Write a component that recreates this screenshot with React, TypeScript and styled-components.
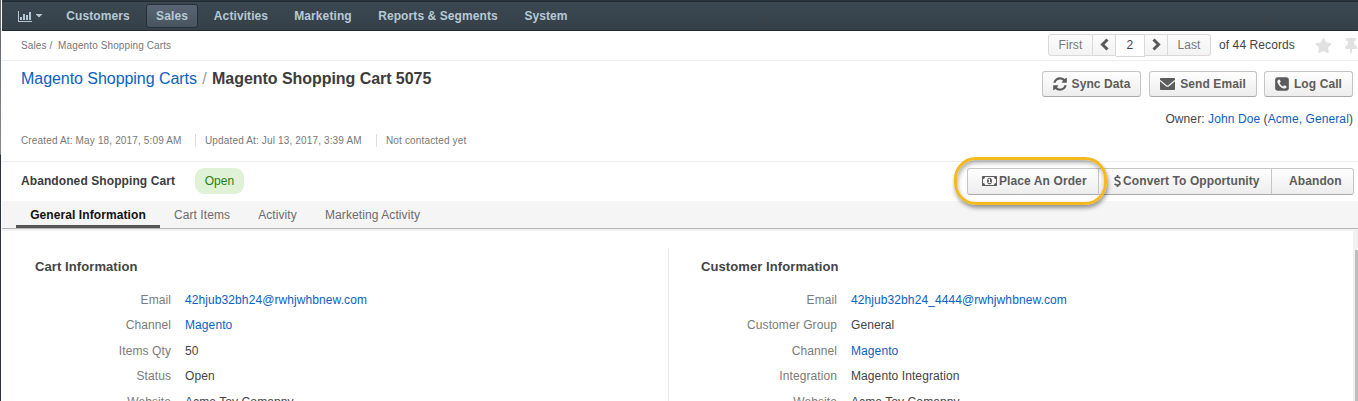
import React from "react";
import styled, { createGlobalStyle, css } from "styled-components";
import { FaStar, FaThumbtack } from "react-icons/fa";

const Global = createGlobalStyle`
  * { box-sizing: border-box; }
  body { margin: 0; background: #fff; font-family: "Liberation Sans", Arial, sans-serif; font-size: 12px; letter-spacing: 0.09px; color: #444; overflow: hidden; }
`;

const Frame = styled.div`
  display: flex;
  height: 401px;
  overflow: hidden;
`;
const WindowEdge = styled.div`
  flex: 0 0 1px;
  margin-right: 1px;
  background: linear-gradient(#5c6368 0, #888b8f 154px, #2b3342 155px);
`;
const Page = styled.div`
  flex: 1;
  min-width: 0;
  display: flex;
  flex-direction: column;
`;
const Link = styled.a`
  color: #0a61c4;
  text-decoration: none;
`;

const NavBar = styled.nav`
  flex: 0 0 31px;
  display: flex;
  align-items: center;
  padding: 1px 0 0 16px;
  border-top: 1px solid #2c353c;
  border-bottom: 1px solid #202a32;
  background: linear-gradient(#222c34 0 1px, #3c4851 1px, #354049);
`;
const NavIcon = styled.span`
  display: flex;
  align-items: center;
  gap: 4px;
  width: 32px;
  color: #b3c7d3;
`;
const NavItem = styled.a<{ $active?: boolean; $width: number }>`
  width: ${(p) => p.$width}px;
  height: 24px;
  line-height: 22px;
  text-align: center;
  font-weight: bold;
  color: #b6c9d5;
  white-space: nowrap;
  border: 1px solid transparent;
  border-radius: 3px;
  ${(p) =>
    p.$active &&
    css`
      border-color: #252e36;
      background: linear-gradient(#596573, #485460);
    `}
`;

const CrumbRow = styled.div`
  flex: 0 0 30px;
  display: flex;
  align-items: center;
  padding-left: 19px;
  border-bottom: 1px solid #eee;
`;
const Crumbs = styled.span`
  flex: 1;
  font-size: 10px;
  letter-spacing: 0.11px;
  color: #777;
  white-space: pre;
`;
const Pager = styled.div`
  display: flex;
  height: 22px;
  line-height: 20px;
  margin-top: -1px;
  color: #777;
`;
const PagerCell = styled.span<{ $width: number; $current?: boolean; $edge?: "left" | "right" }>`
  width: ${(p) => p.$width}px;
  height: ${(p) => (p.$current ? 23 : 22)}px;
  display: flex;
  justify-content: center;
  border: 1px solid #d9d9d9;
  border-left-width: ${(p) => (p.$edge === "left" ? 1 : 0)}px;
  border-radius: ${(p) => (p.$edge === "left" ? "3px 0 0 3px" : p.$edge === "right" ? "0 3px 3px 0" : "0")};
  background: ${(p) => (p.$current ? "#fff" : "linear-gradient(#fcfcfc, #f3f3f3)")};
  color: ${(p) => (p.$current ? "#444" : "#777")};
  svg { margin-top: 3px; }
`;
const Records = styled.span`
  margin-left: 8px;
  width: 96px;
  line-height: 22px;
  color: #444;
`;
const MarkIcons = styled.span`
  display: flex;
  align-items: center;
  width: 43px;
  gap: 11px;
  overflow: hidden;
  color: #e1e1e1;
  svg { flex: none; }
`;

const TitleRow = styled.header`
  flex: 0 0 101px;
  display: flex;
  justify-content: space-between;
  padding: 8px 5px 0 19px;
  border-bottom: 1px solid #eee;
`;
const TitleSide = styled.div`
  display: flex;
  flex-direction: column;
`;
const Title = styled.h1`
  margin: 0;
  height: 20px;
  line-height: 20px;
  font-size: 16px;
  font-weight: normal;
  letter-spacing: -0.05px;
  white-space: pre;
`;
const Slash = styled.span`
  color: #999;
  margin: 0 1px;
`;
const Strong = styled.strong`
  color: #3c3c3c;
`;
const MetaList = styled.div`
  display: flex;
  margin-top: 45px;
  font-size: 10px;
  line-height: 13px;
  color: #777;
  letter-spacing: 0.15px;
`;
const Meta = styled.span<{ $width: number }>`
  width: ${(p) => p.$width}px;
  white-space: nowrap;
  & + & { border-left: 1px solid #ddd; padding-left: 9px; }
`;
const ActionSide = styled.div`
  display: flex;
  flex-direction: column;
  align-items: flex-end;
  padding-top: 2px;
`;
const ActionList = styled.div`
  display: flex;
`;
const raised = css`
  display: flex;
  align-items: center;
  justify-content: center;
  border: 1px solid #c6c6c6;
  border-bottom-color: #aaa;
  background: linear-gradient(#fff, #ededed);
  color: #5c5c5c;
  font: bold 12px "Liberation Sans", Arial, sans-serif;
  letter-spacing: 0.1px;
  white-space: nowrap;
  padding: 0;
`;
const Button = styled.button<{ $width: number }>`
  ${raised}
  width: ${(p) => p.$width}px;
  height: 26px;
  gap: 5px;
  border-radius: 3px;
  & + & { margin-left: 8px; }
  &:last-child { margin-left: 7px; }
`;
const Owner = styled.div`
  margin-top: 14px;
  line-height: 16px;
  white-space: pre;
`;

const StatusRow = styled.div`
  flex: 0 0 39px;
  display: flex;
  align-items: center;
  padding: 0 4px 1px 19px;
`;
const StatusTitle = styled.strong`
  width: 174px;
  color: #3c3c3c;
`;
const Badge = styled.span`
  width: 49px;
  height: 26px;
  line-height: 26px;
  text-align: center;
  border-radius: 9px;
  background: #dff2d5;
  color: #2d7d10;
`;
const ButtonGroup = styled.div`
  position: relative;
  display: flex;
  margin-left: auto;
`;
const GroupButton = styled.button<{ $width: number; $pad: number }>`
  ${raised}
  justify-content: flex-start;
  width: ${(p) => p.$width}px;
  height: 27px;
  padding-left: ${(p) => p.$pad}px;
  gap: 2px;
  &:not(:first-child) { border-left: 0; }
  &:first-child { border-radius: 3px 0 0 3px; }
  &:nth-child(3) { border-radius: 0 3px 3px 0; }
`;
const Highlight = styled.div`
  position: absolute;
  left: -13px;
  top: -11px;
  width: 153px;
  height: 48px;
  border: 3px solid #f4b91f;
  border-radius: 22px;
  box-shadow: 1px 3px 4px rgba(0, 0, 0, 0.4), inset 1px 3px 4px rgba(0, 0, 0, 0.3);
`;

const TabBar = styled.div`
  flex: 0 0 28px;
  display: flex;
  padding-left: 14px;
  background: #f5f5f5;
  border-bottom: 1px solid #b5b5b5;
`;
const Tab = styled.a<{ $active?: boolean; $width: number }>`
  width: ${(p) => p.$width}px;
  height: 27px;
  line-height: 28px;
  text-align: center;
  white-space: nowrap;
  color: ${(p) => (p.$active ? "#111" : "#6c6c6c")};
  font-weight: ${(p) => (p.$active ? "bold" : "normal")};
  border-bottom: ${(p) => (p.$active ? "3px solid #555" : "0")};
`;

const Content = styled.main`
  flex: 1;
  min-height: 0;
  display: flex;
  overflow: hidden;
  border-top: 2px solid #f3f3f3;
`;
const Column = styled.section<{ $width: number }>`
  width: ${(p) => p.$width}px;
  padding: 27px 0 0 33px;
`;
const Divider = styled.div`
  flex: 0 0 1px;
  margin: 17px -1px 0 0;
  background: #e9e9e9;
`;
const SectionTitle = styled.h2`
  margin: 0 0 12px;
  font-size: 13px;
  line-height: 18px;
  color: #444;
`;
const FieldRow = styled.div`
  display: grid;
  grid-template-columns: 136px 1fr;
  column-gap: 14px;
  height: 25.4px;
  line-height: 25px;
`;
const Label = styled.span`
  text-align: right;
  color: #7b7b7b;
`;
const ScrollTrack = styled.div`
  flex: 0 0 5px;
  margin-left: auto;
  padding: 19px 0 0 2px;
  background: #f1f1f1;
`;
const ScrollThumb = styled.div`
  height: 100%;
  background: #bdbdbd;
`;

const ChartIcon = () => (
  <svg width="14" height="11" viewBox="0 0 14 11" fill="currentColor">
    <path d="M0 0h1v10h13v1H0zM2 6h2v3H2zM5 3h2v6H5zM8 4h2v5H8zM11 1h2v8h-2z" />
  </svg>
);
const CaretIcon = () => (
  <svg width="6" height="4" viewBox="0 0 6 4" fill="currentColor">
    <path d="M0 0h6v.5L3 3.500L0 .5z" />
  </svg>
);
const ChevronIcon = ({ right }: { right?: boolean }) => (
  <svg width="9" height="13" viewBox="0 0 9 13" fill="none" stroke="#5b5b5b" strokeWidth="3">
    <path d={right ? "M1.500 1.500L6.500 6.500L1.500 11.500" : "M7.500 1.500L2.500 6.500L7.500 11.500"} />
  </svg>
);
const DollarIcon = () => (
  <svg width="7" height="14" viewBox="0 0 7 14" fill="none" stroke="currentColor" strokeWidth="1.700">
    <path d="M6.200 4.100Q4.900 3 3.500 3Q1.100 3.100 1.100 4.800Q1.100 6.100 3.500 6.800Q6 7.500 6 9.200Q5.900 11 3.500 11Q1.900 11 0.600 9.800M3.500 1v2M3.500 11v2" />
  </svg>
);
const RefreshIcon = () => (
  <svg width="14" height="16" viewBox="0 0 1536 1792" fill="currentColor">
    <path d="M1511 1056q0 5-1 7-64 268-268 434.500t-478 166.500q-146 0-282.500-55t-243.500-157l-129 129q-19 19-45 19t-45-19-19-45v-448q0-26 19-45t45-19h448q26 0 45 19t19 45-19 45l-137 137q71 66 161 102t187 36q134 0 250-65t186-179q11-17 53-117 8-23 30-23h192q13 0 22.500 9.500t9.500 22.500zm25-800v448q0 26-19 45t-45 19h-448q-26 0-45-19t-19-45 19-45l138-138q-148-137-349-137-134 0-250 65t-186 179q-11 17-53 117-8 23-30 23h-199q-13 0-22.500-9.500t-9.500-22.500v-7q65-268 270-434.500t480-166.500q146 0 284 55.500t245 156.500l130-129q19-19 45-19t45 19 19 45z" />
  </svg>
);
const EnvelopeIcon = () => (
  <svg width="15" height="12" viewBox="0 0 15 12">
    <rect width="15" height="12" rx="0.800" fill="#5c5c5c" />
    <path d="M0 2.500L6.300 7.700Q7.500 8.500 8.700 7.700L15 2.500" fill="none" stroke="#f8f8f8" strokeWidth="1.200" />
  </svg>
);
const PhoneIcon = () => (
  <svg width="14" height="16" viewBox="0 0 1536 1792" fill="currentColor">
    <path d="M1280 1193q0-11-2-16-3-8-38.500-29.500t-88.500-49.500l-53-29q-5-3-19-13t-25-15-21-5q-18 0-47 32.500t-57 65.500-44 33q-7 0-16.500-3.500t-15.500-6.500-17-9.500-14-8.500q-99-55-170.500-126.500t-126.500-170.500q-2-3-8.500-14t-9.500-17-6.500-15.500-3.500-16.500q0-13 20.500-33.500t45-38.500 45-39.500 20.500-36.500q0-10-5-21t-15-25-13-19q-3-6-15-28.500t-25-45.500-26.500-47.500-25-40.500-16.500-18-16-2q-48 0-101 22-46 21-80 94.500t-34 130.500q0 16 2.500 34t5 30.500 9 33 10 29.500 12.500 33 11 30q60 164 216.500 320.500t320.500 216.500q6 2 30 11t33 12.500 29.500 10 33 9 30.500 5 34 2.500q57 0 130.500-34t94.500-80q22-53 22-101zm256-777v960q0 119-84.500 203.500t-203.500 84.500h-960q-119 0-203.500-84.500t-84.500-203.500v-960q0-119 84.500-203.500t203.500-84.500h960q119 0 203.500 84.500t84.500 203.500z" />
  </svg>
);
const MoneyIcon = () => (
  <svg width="15" height="14" viewBox="0 0 1920 1792" fill="currentColor">
    <path d="M768 1152h384v-96h-128v-448h-114l-148 137 77 80q42-37 55-57h2v288h-128v96zm512-256q0 70-21 142t-59.500 134-101.500 101-138 39-138-39-101.500-101-59.500-134-21-142 21-142 59.500-134 101.500-101 138-39 138 39 101.500 101 59.500 134 21 142zm512 256v-512q-106 0-181-75t-75-181h-1152q0 106-75 181t-181 75v512q106 0 181 75t75 181h1152q0-106 75-181t181-75zm128-832v1152q0 26-19 45t-45 19h-1792q-26 0-45-19t-19-45v-1152q0-26 19-45t45-19h1792q26 0 45 19t19 45z" />
  </svg>
);

type FieldData = { label: string; value: string; link?: boolean };

const cartFields: FieldData[] = [
  { label: "Email", value: "42hjub32bh24@rwhjwhbnew.com", link: true },
  { label: "Channel", value: "Magento", link: true },
  { label: "Items Qty", value: "50" },
  { label: "Status", value: "Open" },
  { label: "Website", value: "Acme Toy Comapny" },
];
const customerFields: FieldData[] = [
  { label: "Email", value: "42hjub32bh24_4444@rwhjwhbnew.com", link: true },
  { label: "Customer Group", value: "General" },
  { label: "Channel", value: "Magento", link: true },
  { label: "Integration", value: "Magento Integration" },
  { label: "Website", value: "Acme Toy Comapny" },
];

const Fields = ({ items }: { items: FieldData[] }) => (
  <>
    {items.map((f) => (
      <FieldRow key={f.label}>
        <Label>{f.label}</Label>
        {f.link ? <Link>{f.value}</Link> : <span>{f.value}</span>}
      </FieldRow>
    ))}
  </>
);

export default function App() {
  return (
    <Frame>
      <Global />
      <WindowEdge />
      <Page>
        <NavBar>
          <NavIcon>
            <ChartIcon />
            <CaretIcon />
          </NavIcon>
          <NavItem $width={96}>Customers</NavItem>
          <NavItem $width={52} $active>Sales</NavItem>
          <NavItem $width={86}>Activities</NavItem>
          <NavItem $width={78}>Marketing</NavItem>
          <NavItem $width={152}>Reports &amp; Segments</NavItem>
          <NavItem $width={64}>System</NavItem>
        </NavBar>
        <CrumbRow>
          <Crumbs>{"Sales /  Magento Shopping Carts"}</Crumbs>
          <Pager>
            <PagerCell $width={45} $edge="left">First</PagerCell>
            <PagerCell $width={23}><ChevronIcon /></PagerCell>
            <PagerCell $width={29} $current>2</PagerCell>
            <PagerCell $width={23}><ChevronIcon right /></PagerCell>
            <PagerCell $width={43} $edge="right">Last</PagerCell>
            <Records>of 44 Records</Records>
          </Pager>
          <MarkIcons>
            <FaStar size={17} />
            <FaThumbtack size={16} />
          </MarkIcons>
        </CrumbRow>
        <TitleRow>
          <TitleSide>
            <Title>
              <Link>Magento Shopping Carts</Link>
              <Slash>{" / "}</Slash>
              <Strong>Magento Shopping Cart 5075</Strong>
            </Title>
            <MetaList>
              <Meta $width={174}>Created At: May 18, 2017, 5:09 AM</Meta>
              <Meta $width={181}>Updated At: Jul 13, 2017, 3:39 AM</Meta>
              <Meta $width={100}>Not contacted yet</Meta>
            </MetaList>
          </TitleSide>
          <ActionSide>
            <ActionList>
              <Button $width={99}><RefreshIcon />Sync Data</Button>
              <Button $width={108}><EnvelopeIcon />Send Email</Button>
              <Button $width={89}><PhoneIcon />Log Call</Button>
            </ActionList>
            <Owner>
              Owner: <Link>John Doe</Link> (<Link>Acme, General</Link>)
            </Owner>
          </ActionSide>
        </TitleRow>
        <StatusRow>
          <StatusTitle>Abandoned Shopping Cart</StatusTitle>
          <Badge>Open</Badge>
          <ButtonGroup>
            <GroupButton $width={132} $pad={14}><MoneyIcon />Place An Order</GroupButton>
            <GroupButton $width={173} $pad={15}><DollarIcon />Convert To Opportunity</GroupButton>
            <GroupButton $width={82} $pad={17}>Abandon</GroupButton>
            <Highlight />
          </ButtonGroup>
        </StatusRow>
        <TabBar>
          <Tab $width={144} $active>General Information</Tab>
          <Tab $width={84}>Cart Items</Tab>
          <Tab $width={67}>Activity</Tab>
          <Tab $width={123}>Marketing Activity</Tab>
        </TabBar>
        <Content>
          <Column $width={666}>
            <SectionTitle>Cart Information</SectionTitle>
            <Fields items={cartFields} />
          </Column>
          <Divider />
          <Column $width={685}>
            <SectionTitle>Customer Information</SectionTitle>
            <Fields items={customerFields} />
          </Column>
          <ScrollTrack><ScrollThumb /></ScrollTrack>
        </Content>
      </Page>
    </Frame>
  );
}
